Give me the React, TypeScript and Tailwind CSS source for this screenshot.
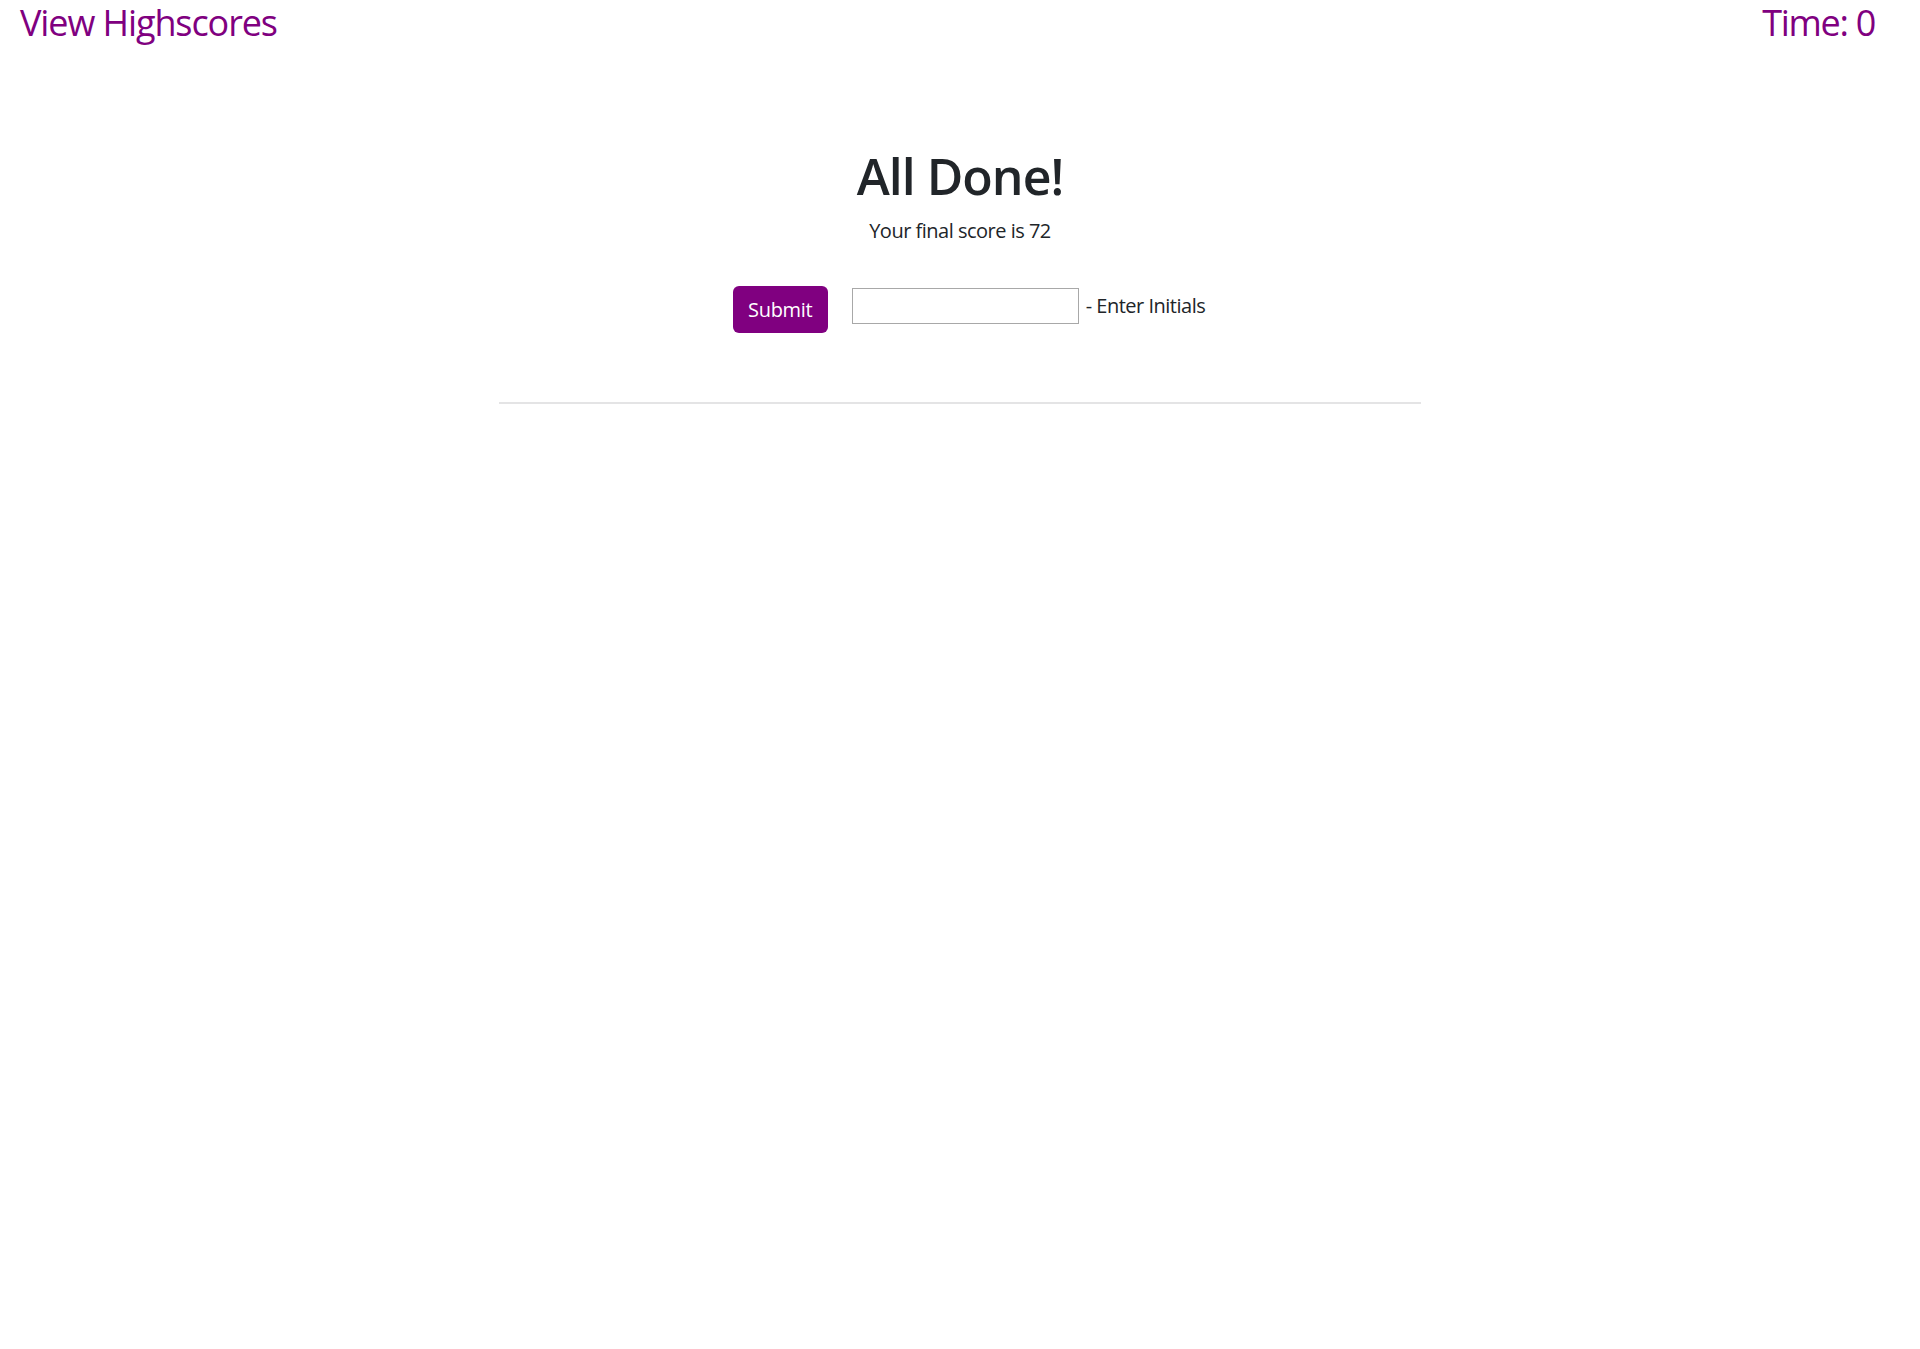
import React from "react";

export default function App() {
  return (
    <div
      className="min-h-screen w-full bg-white text-[#212529]"
      style={{ fontFamily: '"Open Sans", "Noto Sans", sans-serif' }}
    >
      <header className="flex h-[43px] items-start justify-between pl-[20px] pr-[45px]">
        <a
          href="#"
          className="mt-[1px] text-[36px] font-medium leading-[43px] tracking-[-1.1px] text-[#800080] no-underline"
        >
          View Highscores
        </a>
        <span className="mt-[1px] text-[36px] font-medium leading-[43px] tracking-[-1.3px] text-[#800080]">
          Time: 0
        </span>
      </header>

      <main className="mx-auto w-[922px] text-center">
        <h1 className="mt-[103px] text-[50px] font-semibold leading-[60px] tracking-[-1px]">All Done!</h1>
        <p className="mt-[10px] text-[20px] leading-[30px] tracking-[-0.5px]">Your final score is 72</p>

        <div className="mt-[40px] flex items-start justify-center pl-[18px]">
          <button
            type="button"
            className="h-[47px] w-[95px] rounded-[6px] bg-[#800080] text-[20px] leading-[30px] tracking-[-0.3px] text-white"
          >
            Submit
          </button>
          <input
            type="text"
            className="ml-[24px] mt-[2px] h-[36px] w-[227px] border border-[#a8a8a8] bg-white px-1 text-[18px] outline-none"
          />
          <label className="ml-[7px] mt-[5px] text-[20px] leading-[30px] tracking-[-0.5px]">
            - Enter Initials
          </label>
        </div>

        <hr className="mt-[69px] border-0 border-t-[2px] border-[#e4e4e5]" />
      </main>
    </div>
  );
}
